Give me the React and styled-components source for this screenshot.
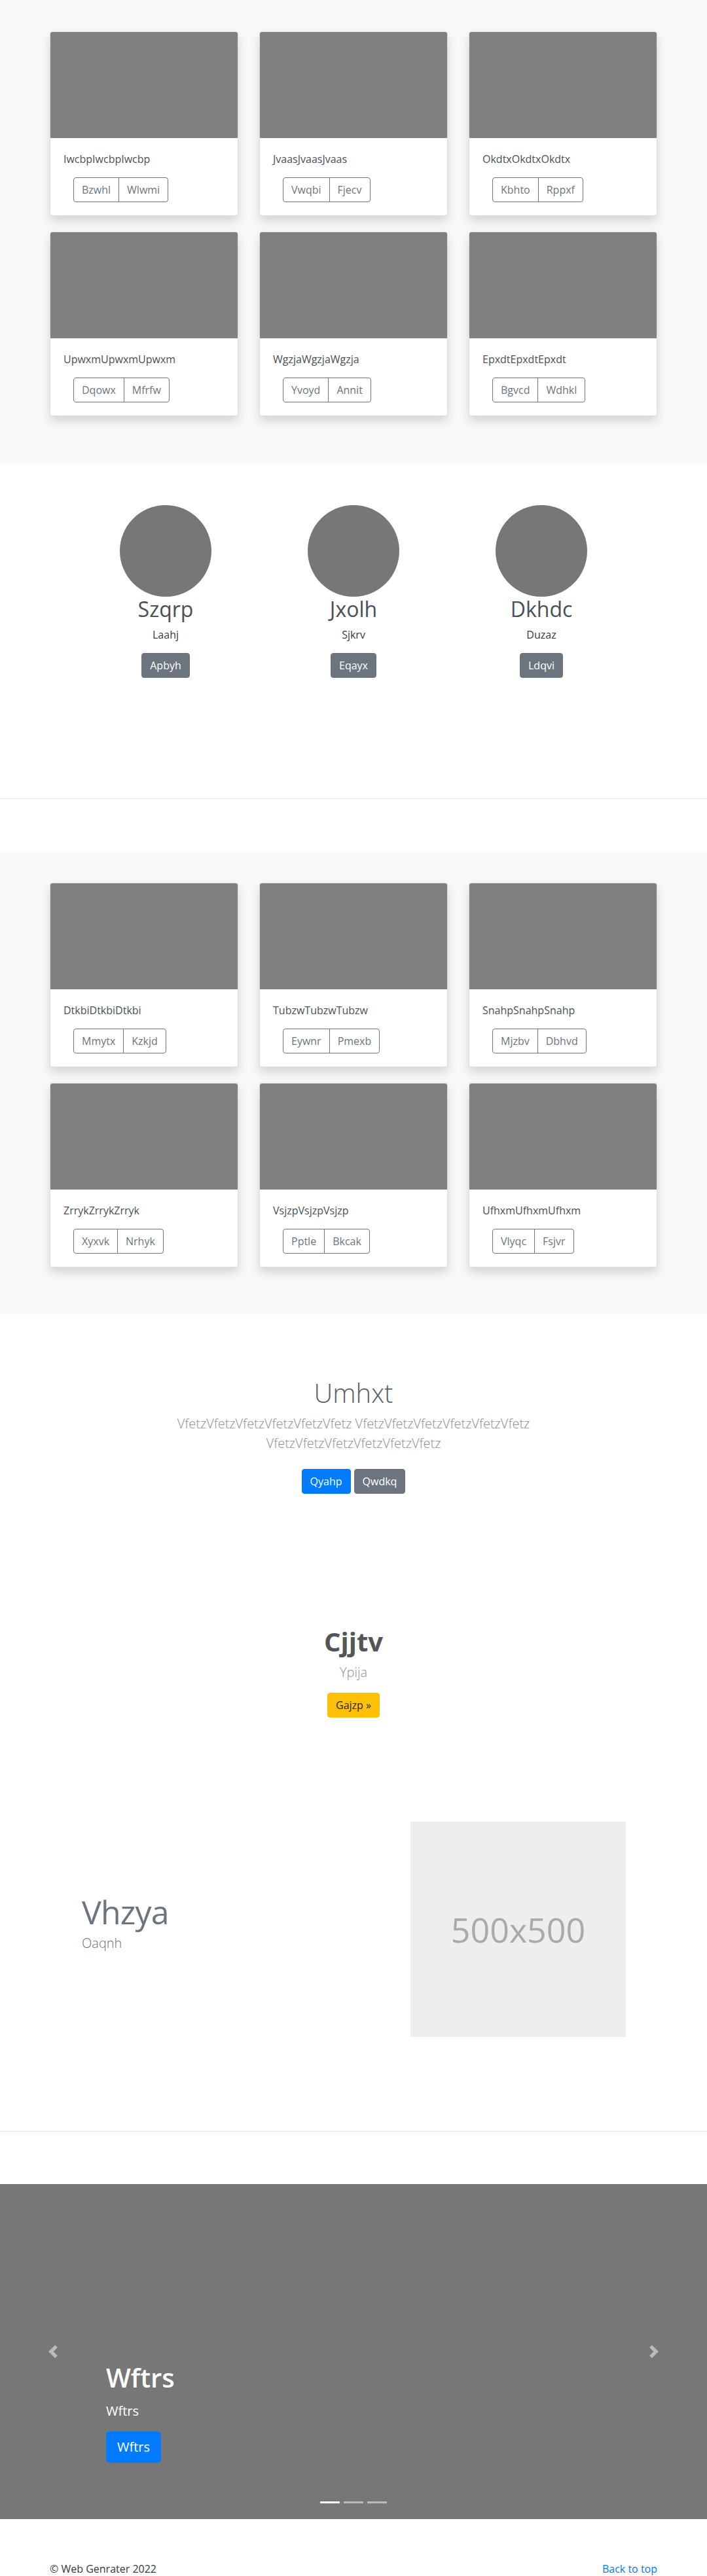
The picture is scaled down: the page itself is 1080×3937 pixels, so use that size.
import React from "react";
import styled, { createGlobalStyle } from "styled-components";

const albumOne = [
  { text: "IwcbpIwcbpIwcbp", buttons: ["Bzwhl", "Wlwmi"] },
  { text: "JvaasJvaasJvaas", buttons: ["Vwqbi", "Fjecv"] },
  { text: "OkdtxOkdtxOkdtx", buttons: ["Kbhto", "Rppxf"] },
  { text: "UpwxmUpwxmUpwxm", buttons: ["Dqowx", "Mfrfw"] },
  { text: "WgzjaWgzjaWgzja", buttons: ["Yvoyd", "Annit"] },
  { text: "EpxdtEpxdtEpxdt", buttons: ["Bgvcd", "Wdhkl"] },
];

const albumTwo = [
  { text: "DtkbiDtkbiDtkbi", buttons: ["Mmytx", "Kzkjd"] },
  { text: "TubzwTubzwTubzw", buttons: ["Eywnr", "Pmexb"] },
  { text: "SnahpSnahpSnahp", buttons: ["Mjzbv", "Dbhvd"] },
  { text: "ZrrykZrrykZrryk", buttons: ["Xyxvk", "Nrhyk"] },
  { text: "VsjzpVsjzpVsjzp", buttons: ["Pptle", "Bkcak"] },
  { text: "UfhxmUfhxmUfhxm", buttons: ["Vlyqc", "Fsjvr"] },
];

const team = [
  { name: "Szqrp", role: "Laahj", action: "Apbyh" },
  { name: "Jxolh", role: "Sjkrv", action: "Eqayx" },
  { name: "Dkhdc", role: "Duzaz", action: "Ldqvi" },
];

function Album({ items }) {
  return (
    <AlbumSection>
      <CardGrid>
        {items.map((e) => (
          <Card key={e.text}>
            <Thumb />
            <CardBody>
              <CardText>{e.text}</CardText>
              <BtnGroup>
                {e.buttons.map((b) => (
                  <GroupBtn key={b}>{b}</GroupBtn>
                ))}
              </BtnGroup>
            </CardBody>
          </Card>
        ))}
      </CardGrid>
    </AlbumSection>
  );
}

function App() {
  return (
    <>
      <GlobalStyle />
      <Album items={albumOne} />

      <TeamSection>
        <TeamGrid>
          {team.map((m) => (
            <Member key={m.name}>
              <Avatar />
              <MemberName>{m.name}</MemberName>
              <MemberRole>{m.role}</MemberRole>
              <BtnRow>
                <Btn $bg="#6c757d">{m.action}</Btn>
              </BtnRow>
            </Member>
          ))}
        </TeamGrid>
      </TeamSection>
      <Divider />

      <Album items={albumTwo} />

      <Hero>
        <HeroInner>
          <HeroTitle>Umhxt</HeroTitle>
          <Lead>
            VfetzVfetzVfetzVfetzVfetzVfetz VfetzVfetzVfetzVfetzVfetzVfetz
            VfetzVfetzVfetzVfetzVfetzVfetz
          </Lead>
          <HeroActions>
            <Btn $bg="#007bff">Qyahp</Btn>
            <Btn $bg="#6c757d">Qwdkq</Btn>
          </HeroActions>
        </HeroInner>
      </Hero>

      <Cta>
        <CtaTitle>Cjjtv</CtaTitle>
        <Lead>Ypija</Lead>
        <Btn $bg="#ffc107" $text="#212529">Gajzp »</Btn>
      </Cta>

      <Feature>
        <FeatureText>
          <FeatureTitle>Vhzya</FeatureTitle>
          <FeatureLead>Oaqnh</FeatureLead>
        </FeatureText>
        <Placeholder>500x500</Placeholder>
      </Feature>
      <Divider />

      <Carousel>
        <CaptionTitle>Wftrs</CaptionTitle>
        <CaptionText>Wftrs</CaptionText>
        <BtnRow>
          <BigBtn>Wftrs</BigBtn>
        </BtnRow>
        <Control $side="left">
          <svg width="20" height="20" viewBox="0 0 8 8" fill="#fff">
            <path d="M5.25 0l-4 4 4 4 1.5-1.5-2.5-2.5 2.5-2.5-1.5-1.5z" />
          </svg>
        </Control>
        <Control $side="right">
          <svg width="20" height="20" viewBox="0 0 8 8" fill="#fff">
            <path d="M2.75 0l-1.5 1.5 2.5 2.5-2.5 2.5 1.5 1.5 4-4-4-4z" />
          </svg>
        </Control>
        <Indicators>
          <Indicator $active />
          <Indicator />
          <Indicator />
        </Indicators>
      </Carousel>

      <Footer>
        <span>© Web Genrater 2022</span>
        <BackLink href="#">Back to top</BackLink>
      </Footer>
    </>
  );
}

export default App;

const GlobalStyle = createGlobalStyle`
  *, *::before, *::after {
    box-sizing: border-box;
  }
  body {
    margin: 0;
    font-family: "Open Sans", "Noto Sans", Arial, sans-serif;
    font-size: 16px;
    line-height: 1.5;
    color: #343a40;
    background: #fff;
  }
  h1, h2, p {
    margin: 0;
  }
`;

const AlbumSection = styled.section`
  background: #f8f9fa;
  padding: 48px 0 72px;
`;
const CardGrid = styled.div`
  width: 928px;
  margin: 0 auto;
  display: grid;
  grid-template-columns: repeat(3, 288px);
  column-gap: 32px;
  row-gap: 24px;
`;
const Card = styled.div`
  background: #fff;
  border: 1px solid rgba(0, 0, 0, 0.125);
  border-radius: 4px;
  overflow: hidden;
  box-shadow: 0 8px 16px rgba(0, 0, 0, 0.15);
`;
const Thumb = styled.div`
  height: 162px;
  background: #808080;
`;
const CardBody = styled.div`
  padding: 20px;
`;
const CardText = styled.p`
  margin-bottom: 16px;
  color: #495057;
`;
const BtnGroup = styled.div`
  display: inline-flex;
  margin-left: 15px;
`;
const GroupBtn = styled.button`
  font-family: inherit;
  font-size: 16px;
  line-height: 24px;
  padding: 6px 12px;
  color: #6c757d;
  background: transparent;
  border: 1px solid #6c757d;
  &:first-child {
    border-radius: 4px 0 0 4px;
  }
  &:last-child {
    border-radius: 0 4px 4px 0;
    margin-left: -1px;
  }
`;

const TeamSection = styled.section`
  padding: 64px 0;
`;
const TeamGrid = styled.div`
  width: 861px;
  margin: 0 auto;
  display: grid;
  grid-template-columns: repeat(3, 1fr);
`;
const Member = styled.div`
  display: flex;
  flex-direction: column;
  align-items: center;
  text-align: center;
  margin-bottom: 24px;
`;
const Avatar = styled.div`
  width: 140px;
  height: 140px;
  border-radius: 50%;
  background: #777;
`;
const MemberName = styled.h2`
  font-size: 32px;
  font-weight: 400;
  line-height: 1.2;
  color: #495057;
  margin-bottom: 8px;
`;
const MemberRole = styled.p`
  margin-bottom: 16px;
`;
const BtnRow = styled.p`
  margin-bottom: 16px;
`;
const Btn = styled.a`
  display: inline-block;
  font-size: 16px;
  line-height: 24px;
  padding: 6px 12px;
  border-radius: 4px;
  text-decoration: none;
  color: ${(p) => p.$text || "#fff"};
  background: ${(p) => p.$bg};
  border: 1px solid ${(p) => p.$bg};
`;

const Divider = styled.hr`
  margin: 80px 0;
  border: 0;
  border-top: 1px solid rgba(0, 0, 0, 0.1);
`;

const Hero = styled.section`
  padding: 96px 15px;
  text-align: center;
`;
const HeroInner = styled.div`
  max-width: 610px;
  margin: 0 auto;
`;
const HeroTitle = styled.h1`
  font-size: 40px;
  font-weight: 300;
  line-height: 1.2;
  color: #5a6168;
  margin-bottom: 8px;
`;
const Lead = styled.p`
  font-size: 20px;
  font-weight: 300;
  line-height: 1.5;
  color: #8a9096;
  margin-bottom: 16px;
`;
const HeroActions = styled.div`
  display: flex;
  justify-content: center;
  gap: 5px;
  padding: 8px 0;
`;

const Cta = styled.section`
  padding: 98px 15px 95px;
  text-align: center;
`;
const CtaTitle = styled.h1`
  font-size: 40px;
  font-weight: 700;
  line-height: 1.2;
  color: #555;
  margin-bottom: 8px;
`;

const Feature = styled.section`
  display: flex;
  align-items: center;
  justify-content: space-between;
  padding: 64px 124px 64px 125px;
`;
const FeatureText = styled.div`
  display: flex;
  flex-direction: column;
`;
const FeatureTitle = styled.h2`
  font-size: 50px;
  font-weight: 400;
  line-height: 1;
  letter-spacing: -0.8px;
  color: #6c757d;
  margin-bottom: 8px;
`;
const FeatureLead = styled.p`
  font-size: 20px;
  font-weight: 300;
  line-height: 1.5;
  color: #6c6f73;
  margin-bottom: 16px;
`;
const Placeholder = styled.div`
  width: 329px;
  height: 329px;
  background: #eee;
  color: #aaa;
  font-size: 52px;
  display: flex;
  align-items: center;
  justify-content: center;
`;

const Carousel = styled.section`
  position: relative;
  height: 512px;
  background: #777;
  display: flex;
  flex-direction: column;
  justify-content: flex-end;
  align-items: flex-start;
  padding: 0 162px 70px;
  color: #fff;
`;
const CaptionTitle = styled.h1`
  font-size: 40px;
  font-weight: 600;
  line-height: 1.2;
  margin-bottom: 12px;
`;
const CaptionText = styled.p`
  font-size: 20px;
  line-height: 1.5;
  margin-bottom: 16px;
`;
const BigBtn = styled.a`
  display: inline-block;
  font-size: 20px;
  line-height: 30px;
  padding: 8px 16px;
  border-radius: 4.8px;
  color: #fff;
  background: #007bff;
  border: 1px solid #007bff;
`;
const Control = styled.div`
  position: absolute;
  top: 0;
  bottom: 0;
  ${(p) => p.$side}: 0;
  width: 15%;
  display: flex;
  align-items: center;
  justify-content: center;
  opacity: 0.5;
`;
const Indicators = styled.div`
  position: absolute;
  left: 0;
  right: 0;
  bottom: 24px;
  display: flex;
  justify-content: center;
  gap: 6px;
`;
const Indicator = styled.span`
  width: 30px;
  height: 3px;
  background: ${(p) => (p.$active ? "#fff" : "rgba(255, 255, 255, 0.5)")};
`;

const Footer = styled.footer`
  width: 928px;
  margin: 0 auto;
  padding: 64px 0 1px;
  display: flex;
  justify-content: space-between;
  line-height: 24px;
`;
const BackLink = styled.a`
  color: #007bff;
  text-decoration: none;
`;
